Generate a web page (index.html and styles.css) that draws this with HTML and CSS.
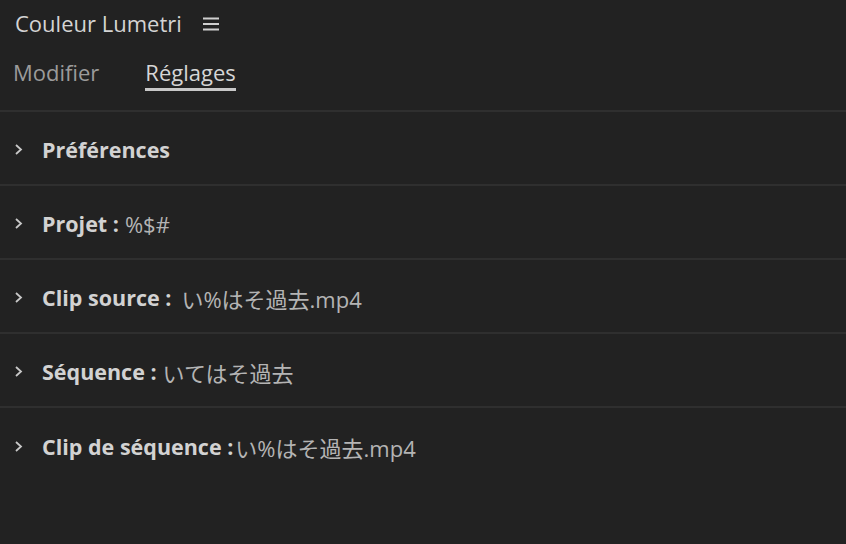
FILE: index.html
```html
<!DOCTYPE html>
<html lang="fr">
<head>
  <meta charset="UTF-8" />
  <title>Couleur Lumetri</title>
  <link rel="stylesheet" href="styles.css">
</head>
<body>

<div class="panel">
  <div class="panel-header">
    <span class="panel-title">Couleur Lumetri</span>
    <svg class="menu-icon" viewBox="0 0 16 14" width="16" height="14">
      <rect x="0" y="0.5" width="16" height="2" fill="#cfcfcf"/>
      <rect x="0" y="6" width="16" height="2" fill="#cfcfcf"/>
      <rect x="0" y="11.5" width="16" height="2" fill="#cfcfcf"/>
    </svg>
  </div>

  <div class="tabs">
    <div class="tab">Modifier</div>
    <div class="tab active">Réglages</div>
  </div>

  <div class="section">
    <svg class="chevron" viewBox="0 0 9 11" width="9" height="11"><path d="M2 1 L7 5.5 L2 10" fill="none" stroke="#c8c8c8" stroke-width="1.8"/></svg>
    <span class="label">Préférences</span>
  </div>
  <div class="section">
    <svg class="chevron" viewBox="0 0 9 11" width="9" height="11"><path d="M2 1 L7 5.5 L2 10" fill="none" stroke="#c8c8c8" stroke-width="1.8"/></svg>
    <span class="label">Projet :</span>
    <span class="value">%$#</span>
  </div>
  <div class="section">
    <svg class="chevron" viewBox="0 0 9 11" width="9" height="11"><path d="M2 1 L7 5.5 L2 10" fill="none" stroke="#c8c8c8" stroke-width="1.8"/></svg>
    <span class="label">Clip source :</span>
    <span class="value spaced">い%はそ過去.mp4</span>
  </div>
  <div class="section">
    <svg class="chevron" viewBox="0 0 9 11" width="9" height="11"><path d="M2 1 L7 5.5 L2 10" fill="none" stroke="#c8c8c8" stroke-width="1.8"/></svg>
    <span class="label">Séquence :</span>
    <span class="value">いてはそ過去</span>
  </div>
  <div class="section last">
    <svg class="chevron" viewBox="0 0 9 11" width="9" height="11"><path d="M2 1 L7 5.5 L2 10" fill="none" stroke="#c8c8c8" stroke-width="1.8"/></svg>
    <span class="label">Clip de séquence :</span><span class="value tight">い%はそ過去.mp4</span>
  </div>
</div>

</body>
</html>
```

FILE: styles.css
```css
body {
  background-color: #222222;
  margin: 0;
  padding: 0;
  font-family: "Open Sans", "Noto Sans CJK JP", sans-serif;
  color: #d2d2d2;
}

.panel {
  width: 846px;
  height: 544px;
  overflow: hidden;
}

.panel-header {
  display: flex;
  align-items: center;
  gap: 21px;
  height: 46px;
  padding: 0 15px;
}

.panel-title {
  font-size: 22px;
  color: #d4d4d4;
}

.menu-icon {
  margin-top: 1px;
}

.tabs {
  display: flex;
  gap: 46px;
  box-sizing: border-box;
  height: 66px;
  padding-left: 13px;
  border-bottom: 2px solid #2f2f2f;
}

.tab {
  font-size: 22px;
  color: #9b9b9b;
  padding-top: 11px;
  height: 31px;
  border-bottom: 3px solid transparent;
}

.tab.active {
  color: #d6d6d6;
  border-bottom-color: #c8c8c8;
}

.section {
  display: flex;
  align-items: center;
  box-sizing: border-box;
  height: 74px;
  padding-left: 14px;
  padding-top: 3px;
  border-bottom: 2px solid #2f2f2f;
  font-size: 21.5px;
}

.section.last {
  border-bottom: none;
}

.chevron {
  margin-right: 19px;
}

.label {
  font-weight: bold;
  color: #d2d2d2;
}

.value {
  margin-left: 6px;
  font-size: 22px;
  color: #b4b4b4;
}

.value.spaced {
  margin-left: 10px;
}

.value.tight {
  margin-left: 2px;
}
```
